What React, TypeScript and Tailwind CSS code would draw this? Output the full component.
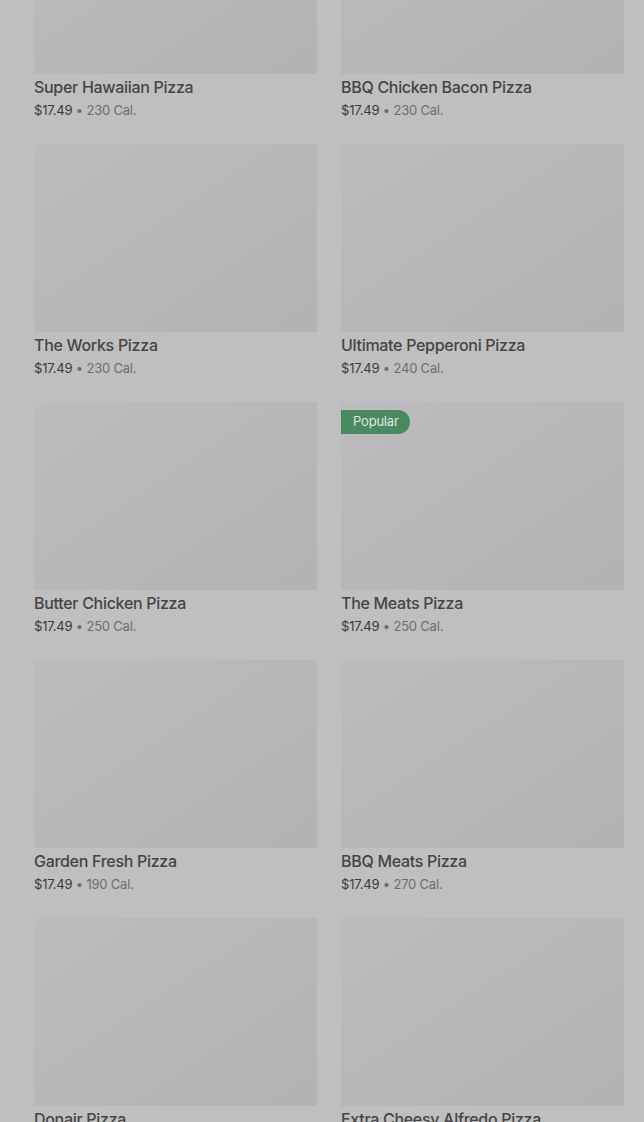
const items = [
  { name: "Super Hawaiian Pizza", price: "$17.49", cal: "230 Cal." },
  { name: "BBQ Chicken Bacon Pizza", price: "$17.49", cal: "230 Cal." },
  { name: "The Works Pizza", price: "$17.49", cal: "230 Cal." },
  { name: "Ultimate Pepperoni Pizza", price: "$17.49", cal: "240 Cal." },
  { name: "Butter Chicken Pizza", price: "$17.49", cal: "250 Cal." },
  { name: "The Meats Pizza", price: "$17.49", cal: "250 Cal.", popular: true },
  { name: "Garden Fresh Pizza", price: "$17.49", cal: "190 Cal." },
  { name: "BBQ Meats Pizza", price: "$17.49", cal: "270 Cal." },
  { name: "Donair Pizza", price: "$17.49", cal: "250 Cal." },
  { name: "Extra Cheesy Alfredo Pizza", price: "$17.49", cal: "260 Cal." },
];

type Item = (typeof items)[number] & { popular?: boolean };

const Card = ({ item }: { item: Item }) => (
  <div className="flex flex-col">
    <div className="relative h-[188px] w-full bg-linear-to-br from-[#bcbcbc] to-[#b2b2b2]">
      {item.popular && (
        <span className="absolute left-0 top-2 flex h-6 items-center rounded-r-full bg-[#4a8a60] pl-3 pr-[11px] text-[13px] tracking-[-0.2px] text-[#dfe7e1]">
          Popular
        </span>
      )}
    </div>
    <div className="mt-[2px] text-[16px] font-medium leading-[22px] tracking-[-0.3px] text-[#454545]">{item.name}</div>
    <div className="mt-[1px] text-[13px] leading-[22px] tracking-[-0.2px]">
      <span className="text-[#3a3a3a]">{item.price}</span>
      <span className="text-[#6e6e6e]"> • {item.cal}</span>
    </div>
  </div>
);

export default function App() {
  return (
    <div className="h-[1122px] w-full overflow-hidden bg-[#bfbfbf] font-['Inter',sans-serif]">
      <div className="-mt-[114px] grid grid-cols-2 gap-x-6 gap-y-[23px] pl-[34px] pr-[20px]">
        {items.map((item) => (
          <Card key={item.name} item={item as Item} />
        ))}
      </div>
    </div>
  );
}
